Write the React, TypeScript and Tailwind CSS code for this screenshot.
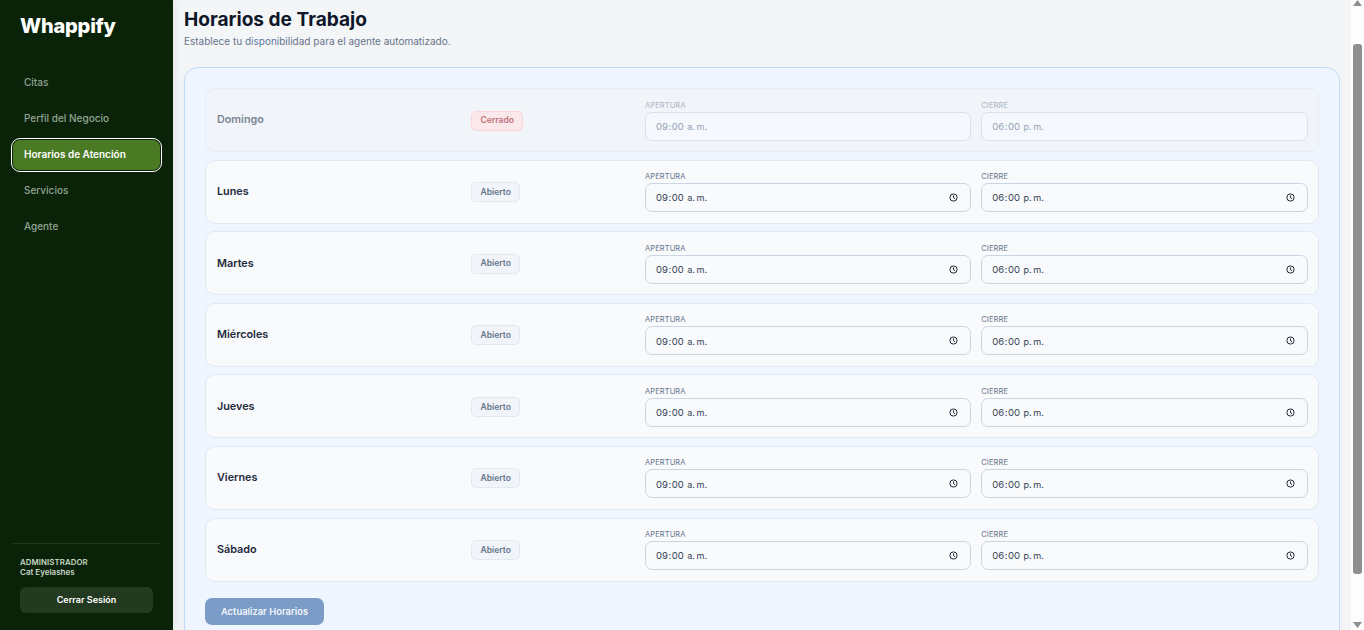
import React from "react";

const days = ["Lunes", "Martes", "Miércoles", "Jueves", "Viernes", "Sábado"];

function ClockIcon() {
  return (
    <svg width="9" height="9" viewBox="0 0 9 9" fill="none" stroke="#1f2937" strokeWidth="1" className="shrink-0">
      <circle cx="4.5" cy="4.5" r="3.6" />
      <path d="M4.5 2.4V4.7L6 5.7" />
    </svg>
  );
}

function TimeField({ label, value, disabled }: { label: string; value: string; disabled?: boolean }) {
  return (
    <div className="flex flex-col">
      <div className={`h-[11px] mb-[1px] text-[7.5px] leading-[11px] tracking-[0.1px] uppercase ${disabled ? "text-[#a9b3c2]" : "text-[#64748b]"}`}>
        {label}
      </div>
      <div
        className={`flex items-center justify-between h-[29px] rounded-[7px] border pl-[10px] pr-[12px] text-[9.5px] ${
          disabled ? "border-[#d9e2ee] bg-[#f5f8fc] text-[#94a3b8]" : "border-[#cbd5e1] bg-[#f8fafc] text-[#334155]"
        }`}
      >
        <span className="whitespace-pre pt-[2px]">
          {value.slice(0, 2)}
          <span className="px-[0.5px]">:</span>
          {value.slice(3, 5)}
          <span className="ml-[3.5px] text-[9.1px] [word-spacing:-0.8px]">{value.slice(6)}</span>
        </span>
        {!disabled && <ClockIcon />}
      </div>
    </div>
  );
}

function DayRow({ day, closed }: { day: string; closed?: boolean }) {
  return (
    <div
      className={`grid grid-cols-[244px_164px_1fr_1fr] gap-x-[10px] items-center h-[64px] rounded-[10px] border pl-[11px] pr-[10.5px] ${
        closed ? "border-[#e6edf6] bg-[#f1f5f9]" : "border-[#e2e8f0] bg-[#f8fafc]"
      }`}
    >
      <div className={`pt-[1px] text-[10.8px] font-semibold ${closed ? "text-[#7c8594]" : "text-[#1e293b]"}`}>{day}</div>
      <div className="flex items-center pt-[1px]">
        <span
          className={`inline-flex items-center h-[20px] px-[8.5px] rounded-[5px] border text-[8.5px] font-semibold ${
            closed ? "border-[#fbd5da] bg-[#fae8ea] text-[#c0717c]" : "border-[#e2e8f0] bg-[#f1f5f9] text-[#64748b]"
          }`}
        >
          {closed ? "Cerrado" : "Abierto"}
        </span>
      </div>
      <TimeField label="Apertura" value="09:00 a. m." disabled={closed} />
      <TimeField label="Cierre" value="06:00 p. m." disabled={closed} />
    </div>
  );
}

const nav = ["Citas", "Perfil del Negocio", "Horarios de Atención", "Servicios", "Agente"];

export default function App() {
  return (
    <div className="flex h-[630px] w-[1364px] overflow-hidden bg-[#f4f5f7] font-['Inter',sans-serif]">
      <aside className="flex w-[173px] shrink-0 flex-col bg-[#0a2308] shadow-[2px_0_8px_rgba(0,0,0,0.08)]">
        <div className="pl-[20px] pt-[13px] h-[67.5px] text-[20px] leading-[26px] font-extrabold text-white tracking-[-0.2px]">
          Whappify
        </div>
        <nav className="flex flex-col gap-[6px] px-[13px]">
          {nav.map((n) => (
            <div
              key={n}
              className={`flex h-[30px] items-center rounded-[7px] pl-[11px] text-[10px] ${
                n === "Horarios de Atención"
                  ? "bg-[#4a7a24] font-semibold text-white outline outline-[1.5px] outline-offset-[1px] outline-white"
                  : "font-medium text-[#93a495]"
              }`}
            >
              {n}
            </div>
          ))}
        </nav>
        <div className="mt-auto mx-[13px] border-t border-[#223a20] pt-[13px] pb-[17px]">
          <div className="px-[7px] text-[7.8px] leading-[10px] font-semibold text-[#c9d6c6] tracking-[0.1px]">ADMINISTRADOR</div>
          <div className="px-[7px] text-[8px] leading-[10px] font-semibold text-[#c9d6c6]">Cat Eyelashes</div>
          <div className="mx-[7px] mt-[10px] flex h-[26px] items-center justify-center rounded-[6px] bg-[#233a20] text-[9px] font-semibold text-white">
            Cerrar Sesión
          </div>
        </div>
      </aside>

      <main className="min-w-0 flex-1 overflow-hidden pl-[11px] pr-[11px]">
        <h1 className="pt-[7px] text-[19.1px] leading-[24px] font-bold text-[#0f172a]">Horarios de Trabajo</h1>
        <p className="mt-[3px] text-[10px] leading-[14px] text-[#64748b]">
          Establece tu <span className="text-[#5a7aa0]">disponi</span>bilidad para el agente automatizado.
        </p>
        <section className="mt-[19px] rounded-[14px] border border-[#c3d9f5] bg-[#eff6ff] px-[20px] pt-[20px] pb-[30px] shadow-[0_2px_8px_rgba(0,0,0,0.03)]">
          <div className="flex flex-col gap-[7.6px]">
            <DayRow day="Domingo" closed />
            {days.map((d) => (
              <DayRow key={d} day={d} />
            ))}
          </div>
          <div className="mt-[16px] flex h-[27px] w-[119px] items-center justify-center rounded-[7px] bg-[#7a9cc6] pt-[1px] text-[9.4px] font-semibold text-[#f1f5fb]">
            Actualizar Horarios
          </div>
        </section>
      </main>

      <div className="relative flex w-[13px] shrink-0 flex-col items-center bg-[#fdfdfd]">
        <svg width="9" height="6" viewBox="0 0 9 6" className="fill-[#8f8f8f]"><path d="M4.5 0L9 6H0Z" /></svg>
        <div className="mt-[38px] h-[530px] w-[9px] rounded-[3px] bg-[#8f8f8f]" />
        <svg width="9" height="6" viewBox="0 0 9 6" className="mt-[48px] fill-[#8f8f8f]"><path d="M0 0H9L4.5 6Z" /></svg>
      </div>
    </div>
  );
}
